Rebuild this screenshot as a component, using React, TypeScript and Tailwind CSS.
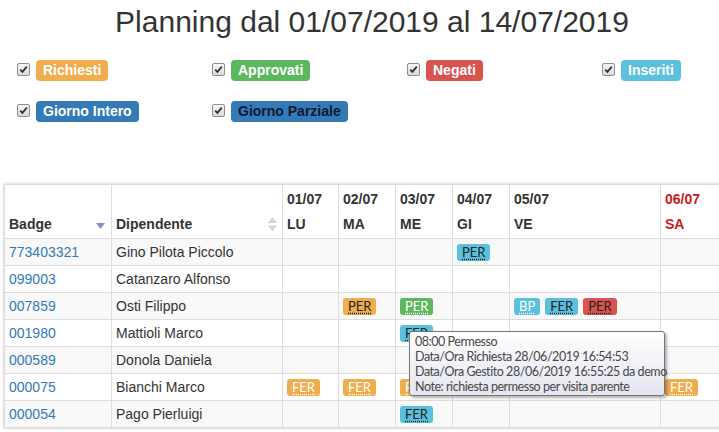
import React from "react";

type Ev = { t: string; c: "o" | "g" | "c" | "r"; w?: boolean };

const days = [
  { d: "01/07", w: "LU", width: 56 },
  { d: "02/07", w: "MA", width: 57 },
  { d: "03/07", w: "ME", width: 57 },
  { d: "04/07", w: "GI", width: 57 },
  { d: "05/07", w: "VE", width: 151 },
  { d: "06/07", w: "SA", width: 80, red: true },
];

const rows: { badge: string; name: string; ev: Record<number, Ev[]> }[] = [
  { badge: "773403321", name: "Gino Pilota Piccolo", ev: { 3: [{ t: "PER", c: "c" }] } },
  { badge: "099003", name: "Catanzaro Alfonso", ev: {} },
  {
    badge: "007859",
    name: "Osti Filippo",
    ev: {
      1: [{ t: "PER", c: "o" }],
      2: [{ t: "PER", c: "g", w: true }],
      4: [
        { t: "BP", c: "c", w: true },
        { t: "FER", c: "c" },
        { t: "PER", c: "r" },
      ],
    },
  },
  { badge: "001980", name: "Mattioli Marco", ev: { 2: [{ t: "FER", c: "c" }] } },
  { badge: "000589", name: "Donola Daniela", ev: {} },
  {
    badge: "000075",
    name: "Bianchi Marco",
    ev: {
      0: [{ t: "FER", c: "o", w: true }],
      1: [{ t: "FER", c: "o", w: true }],
      2: [{ t: "FER", c: "o", w: true }],
      3: [{ t: "FER", c: "o", w: true }],
      4: [{ t: "FER", c: "o", w: true }],
      5: [{ t: "FER", c: "o", w: true }],
    },
  },
  { badge: "000054", name: "Pago Pierluigi", ev: { 2: [{ t: "FER", c: "c" }] } },
];

const evBg = {
  o: "bg-[#f0ad4e]",
  g: "bg-[#5cb85c]",
  c: "bg-[#5bc0de]",
  r: "bg-[#d9534f]",
};

function Check() {
  return (
    <span className="mt-[3px] flex h-[13px] w-[13px] shrink-0 items-center justify-center rounded-[2px] border border-[#8f8f8f] bg-linear-to-b from-[#f6f6f6] to-[#dadada]">
      <svg width="9" height="9" viewBox="0 0 9 9">
        <path d="M1.2 4.6 L3.4 6.8 L7.8 1.6" fill="none" stroke="#333" strokeWidth="1.8" />
      </svg>
    </span>
  );
}

function Filter({ label, bg, dark }: { label: string; bg: string; dark?: boolean }) {
  return (
    <label className="flex items-start gap-[6px]">
      <Check />
      <span
        className={`flex h-[21px] items-center rounded-[4px] px-[7px] text-[14px] font-bold ${bg} ${
          dark ? "text-[#0e1a33]" : "text-white"
        }`}
      >
        {label}
      </span>
    </label>
  );
}

function EvBadge({ e }: { e: Ev }) {
  return (
    <abbr
      className={`inline-block h-[17px] rounded-[3px] px-[5px] font-['Lato',sans-serif] text-[13px] leading-[17px] no-underline ${evBg[e.c]} ${
        e.w ? "text-white" : "text-[#222]"
      }`}
    >
      <span className="underline decoration-dotted underline-offset-[2px]">{e.t}</span>
    </abbr>
  );
}

export default function App() {
  return (
    <div className="relative h-[432px] w-[719px] overflow-hidden bg-white font-['Liberation_Sans',Arial,sans-serif] text-[#333]">
      <h1 className="pl-[25px] pt-[5px] text-center text-[30px] font-normal leading-[33px] text-[#333]">
        Planning dal 01/07/2019 al 14/07/2019
      </h1>

      <div className="mt-[22px] grid grid-cols-[195px_195px_195px_195px] gap-y-[20px] pl-[17px]">
        <Filter label="Richiesti" bg="bg-[#f0ad4e]" />
        <Filter label="Approvati" bg="bg-[#5cb85c]" />
        <Filter label="Negati" bg="bg-[#d9534f]" />
        <Filter label="Inseriti" bg="bg-[#5bc0de]" />
        <Filter label="Giorno Intero" bg="bg-[#337ab7]" />
        <Filter label="Giorno Parziale" bg="bg-[#337ab7]" dark />
      </div>

      <div className="ml-[4px] mt-[62px] w-[760px] shadow-[0_0_3px_rgba(0,0,0,0.25)]">
        <table className="w-[736px] table-fixed border-collapse text-[14px]">
          <colgroup>
            <col className="w-[107px]" />
            <col className="w-[171px]" />
            {days.map((d) => (
              <col key={d.d} style={{ width: d.width }} />
            ))}
          </colgroup>
          <thead>
            <tr className="h-[53px]">
              <th className="border border-[#ddd] px-[4px] pb-[4px] text-left align-bottom font-bold leading-[20px]">
                <div className="flex items-center justify-between">
                  <span>Badge</span>
                  <svg width="9" height="7" viewBox="0 0 9 7" className="mr-[2px] mt-[4px]">
                    <path d="M0 0 H9 L4.5 6 Z" fill="#7f90d0" />
                  </svg>
                </div>
              </th>
              <th className="border border-[#ddd] px-[4px] pb-[4px] text-left align-bottom font-bold leading-[20px]">
                <div className="flex items-center justify-between">
                  <span>Dipendente</span>
                  <svg width="9" height="15" viewBox="0 0 9 15" className="mr-[1px]">
                    <path d="M0 6 H9 L4.5 0 Z" fill="#d4d4d4" />
                    <path d="M0 8.5 H9 L4.5 14.5 Z" fill="#d4d4d4" />
                  </svg>
                </div>
              </th>
              {days.map((d) => (
                <th
                  key={d.d}
                  className={`border border-[#ddd] px-[4px] pb-[4px] pt-[4px] text-left align-bottom font-bold leading-[20px] ${
                    d.red ? "text-[#cc1a1a]" : ""
                  }`}
                >
                  <div>{d.d}</div>
                  <div className="mt-[5px]">{d.w}</div>
                </th>
              ))}
            </tr>
          </thead>
          <tbody>
            {rows.map((r, i) => (
              <tr key={r.badge} className={`h-[27px] ${i % 2 === 0 ? "bg-[#f9f9f9]" : "bg-white"}`}>
                <td className="border border-[#ddd] px-[4px] py-[3px] leading-[20px]">
                  <a className="text-[#337ab7]">{r.badge}</a>
                </td>
                <td className="border border-[#ddd] px-[4px] py-[3px] leading-[20px]">{r.name}</td>
                {days.map((d, j) => (
                  <td key={d.d} className="border border-[#ddd] px-[4px] py-0 align-middle">
                    <div className="flex items-center gap-[5px]">
                      {(r.ev[j] || []).map((e, k) => (
                        <EvBadge key={k} e={e} />
                      ))}
                    </div>
                  </td>
                ))}
              </tr>
            ))}
          </tbody>
        </table>
      </div>

      <div className="absolute left-[409px] top-[331px] h-[65px] w-[256px] whitespace-nowrap rounded-[3px] border border-[#767676] bg-linear-to-b from-white to-[#e4e5f0] px-[5px] pt-[2px] font-['Lato',sans-serif] text-[12.5px] leading-[15px] tracking-[-0.45px] text-[#474747] shadow-[2px_2px_3px_rgba(0,0,0,0.3)]">
        <div>08:00 Permesso</div>
        <div>Data/Ora Richiesta 28/06/2019 16:54:53</div>
        <div>Data/Ora Gestito 28/06/2019 16:55:25 da demo</div>
        <div>Note: richiesta permesso per visita parente</div>
      </div>
    </div>
  );
}
